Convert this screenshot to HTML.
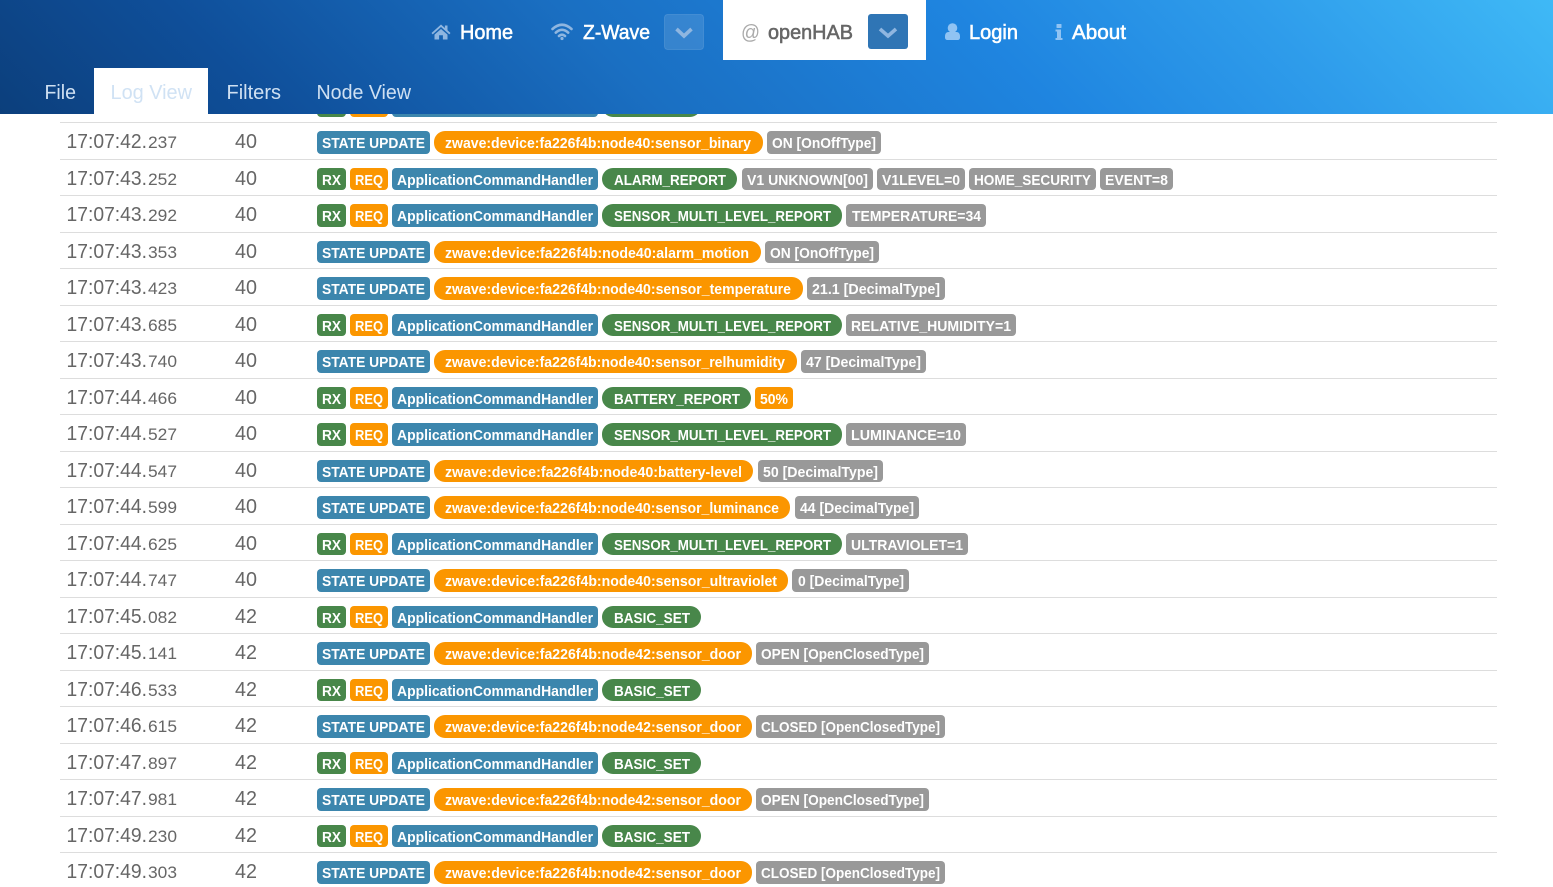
<!DOCTYPE html>
<html lang="en">
<head>
<meta charset="utf-8">
<title>openHAB Log Viewer</title>
<style>
html,body{margin:0;padding:0;background:#fff;overflow:hidden}
body{width:1553px;height:887px;position:relative;font-family:"Liberation Sans",sans-serif}
header{position:absolute;left:0;top:0;width:1553px;height:114px;background:linear-gradient(45deg,#0c3f7c 0%,#0f4f9a 17%,#1a6fc2 40%,#1f85e0 64%,#2f9deb 82%,#3fb9f6 100%)}
header svg,#log{position:absolute;left:0;top:0;display:block}
text{font-family:"Liberation Sans",sans-serif}
#log text.t{font-size:15px;font-weight:700;fill:#fff}
#log text.c{font-size:20.5px;fill:#666}
#log text.m{font-size:17px;fill:#666}
.e rect{height:23px}.d rect{height:22px}
rect.b{fill:#3c86ad}rect.o{fill:#fb9600}rect.g{fill:#48874a}rect.k{fill:#999}
rect{rx:4px}rect.p{rx:11px}
line{stroke:#ddd;stroke-width:1}
.n{font-size:20.5px;fill:#fff;stroke:#fff;stroke-width:.55px}
.s{font-size:20.5px;fill:#cfe0f2}
</style>
</head>
<body>
<svg id="log" width="1553" height="887" viewBox="0 0 1553 887" xmlns="http://www.w3.org/2000/svg">
<g stroke="#ddd" shape-rendering="crispEdges">
<line x1="60" x2="1497" y1="122.5" y2="122.5"/><line x1="60" x2="1497" y1="159.5" y2="159.5"/><line x1="60" x2="1497" y1="195.5" y2="195.5"/><line x1="60" x2="1497" y1="232.5" y2="232.5"/><line x1="60" x2="1497" y1="268.5" y2="268.5"/><line x1="60" x2="1497" y1="305.5" y2="305.5"/><line x1="60" x2="1497" y1="341.5" y2="341.5"/><line x1="60" x2="1497" y1="378.5" y2="378.5"/><line x1="60" x2="1497" y1="414.5" y2="414.5"/><line x1="60" x2="1497" y1="451.5" y2="451.5"/><line x1="60" x2="1497" y1="487.5" y2="487.5"/><line x1="60" x2="1497" y1="524.5" y2="524.5"/><line x1="60" x2="1497" y1="560.5" y2="560.5"/><line x1="60" x2="1497" y1="597.5" y2="597.5"/><line x1="60" x2="1497" y1="633.5" y2="633.5"/><line x1="60" x2="1497" y1="670.5" y2="670.5"/><line x1="60" x2="1497" y1="706.5" y2="706.5"/><line x1="60" x2="1497" y1="743.5" y2="743.5"/><line x1="60" x2="1497" y1="779.5" y2="779.5"/><line x1="60" x2="1497" y1="816.5" y2="816.5"/><line x1="60" x2="1497" y1="852.5" y2="852.5"/>
</g>

<g class="d" transform="translate(0,95)"><rect class="g" x="317" width="29"/><rect class="o" x="350" width="38"/><rect class="b" x="392" width="206"/><rect class="g p" x="602" width="99"/></g>

<g class="e" transform="translate(0,131)"><text class="c" y="17" x="66.500" textLength="80.500" lengthAdjust="spacingAndGlyphs">17:07:42.</text><text class="m" y="17" x="148" textLength="29" lengthAdjust="spacingAndGlyphs">237</text><text class="c" y="17" x="235" textLength="22" lengthAdjust="spacingAndGlyphs">40</text>
<rect class="b" x="317" width="113"/><text class="t" y="17" x="322" textLength="103" lengthAdjust="spacingAndGlyphs">STATE UPDATE</text><rect class="o p" x="434" width="329"/><text class="t" y="17" x="445" textLength="306" lengthAdjust="spacingAndGlyphs">zwave:device:fa226f4b:node40:sensor_binary</text><rect class="k" x="767" width="114"/><text class="t" y="17" x="772" textLength="104" lengthAdjust="spacingAndGlyphs">ON [OnOffType]</text></g>

<g class="d" transform="translate(0,168)"><text class="c" y="17" x="66.500" textLength="80.500" lengthAdjust="spacingAndGlyphs">17:07:43.</text><text class="m" y="17" x="148" textLength="29" lengthAdjust="spacingAndGlyphs">252</text><text class="c" y="17" x="235" textLength="22" lengthAdjust="spacingAndGlyphs">40</text>
<rect class="g" x="317" width="29"/><text class="t" y="17" x="322" textLength="19" lengthAdjust="spacingAndGlyphs">RX</text><rect class="o" x="350" width="38"/><text class="t" y="17" x="355" textLength="28" lengthAdjust="spacingAndGlyphs">REQ</text><rect class="b" x="392" width="206"/><text class="t" y="17" x="397" textLength="196" lengthAdjust="spacingAndGlyphs">ApplicationCommandHandler</text><rect class="g p" x="602" width="135"/><text class="t" y="17" x="614" textLength="112" lengthAdjust="spacingAndGlyphs">ALARM_REPORT</text><rect class="k" x="742" width="131"/><text class="t" y="17" x="747" textLength="121" lengthAdjust="spacingAndGlyphs">V1 UNKNOWN[00]</text><rect class="k" x="877" width="88"/><text class="t" y="17" x="882" textLength="78" lengthAdjust="spacingAndGlyphs">V1LEVEL=0</text><rect class="k" x="969" width="127"/><text class="t" y="17" x="974" textLength="117" lengthAdjust="spacingAndGlyphs">HOME_SECURITY</text><rect class="k" x="1100" width="73"/><text class="t" y="17" x="1105" textLength="63" lengthAdjust="spacingAndGlyphs">EVENT=8</text></g>

<g class="e" transform="translate(0,204)"><text class="c" y="17" x="66.500" textLength="80.500" lengthAdjust="spacingAndGlyphs">17:07:43.</text><text class="m" y="17" x="148" textLength="29" lengthAdjust="spacingAndGlyphs">292</text><text class="c" y="17" x="235" textLength="22" lengthAdjust="spacingAndGlyphs">40</text>
<rect class="g" x="317" width="29"/><text class="t" y="17" x="322" textLength="19" lengthAdjust="spacingAndGlyphs">RX</text><rect class="o" x="350" width="38"/><text class="t" y="17" x="355" textLength="28" lengthAdjust="spacingAndGlyphs">REQ</text><rect class="b" x="392" width="206"/><text class="t" y="17" x="397" textLength="196" lengthAdjust="spacingAndGlyphs">ApplicationCommandHandler</text><rect class="g p" x="602" width="240"/><text class="t" y="17" x="614" textLength="217" lengthAdjust="spacingAndGlyphs">SENSOR_MULTI_LEVEL_REPORT</text><rect class="k" x="846" width="140"/><text class="t" y="17" x="852" textLength="129" lengthAdjust="spacingAndGlyphs">TEMPERATURE=34</text></g>

<g class="d" transform="translate(0,241)"><text class="c" y="17" x="66.500" textLength="80.500" lengthAdjust="spacingAndGlyphs">17:07:43.</text><text class="m" y="17" x="148" textLength="29" lengthAdjust="spacingAndGlyphs">353</text><text class="c" y="17" x="235" textLength="22" lengthAdjust="spacingAndGlyphs">40</text>
<rect class="b" x="317" width="113"/><text class="t" y="17" x="322" textLength="103" lengthAdjust="spacingAndGlyphs">STATE UPDATE</text><rect class="o p" x="434" width="327"/><text class="t" y="17" x="445" textLength="304" lengthAdjust="spacingAndGlyphs">zwave:device:fa226f4b:node40:alarm_motion</text><rect class="k" x="765" width="114"/><text class="t" y="17" x="770" textLength="104" lengthAdjust="spacingAndGlyphs">ON [OnOffType]</text></g>

<g class="e" transform="translate(0,277)"><text class="c" y="17" x="66.500" textLength="80.500" lengthAdjust="spacingAndGlyphs">17:07:43.</text><text class="m" y="17" x="148" textLength="29" lengthAdjust="spacingAndGlyphs">423</text><text class="c" y="17" x="235" textLength="22" lengthAdjust="spacingAndGlyphs">40</text>
<rect class="b" x="317" width="113"/><text class="t" y="17" x="322" textLength="103" lengthAdjust="spacingAndGlyphs">STATE UPDATE</text><rect class="o p" x="434" width="369"/><text class="t" y="17" x="445" textLength="346" lengthAdjust="spacingAndGlyphs">zwave:device:fa226f4b:node40:sensor_temperature</text><rect class="k" x="807" width="138"/><text class="t" y="17" x="812" textLength="128" lengthAdjust="spacingAndGlyphs">21.1 [DecimalType]</text></g>

<g class="d" transform="translate(0,314)"><text class="c" y="17" x="66.500" textLength="80.500" lengthAdjust="spacingAndGlyphs">17:07:43.</text><text class="m" y="17" x="148" textLength="29" lengthAdjust="spacingAndGlyphs">685</text><text class="c" y="17" x="235" textLength="22" lengthAdjust="spacingAndGlyphs">40</text>
<rect class="g" x="317" width="29"/><text class="t" y="17" x="322" textLength="19" lengthAdjust="spacingAndGlyphs">RX</text><rect class="o" x="350" width="38"/><text class="t" y="17" x="355" textLength="28" lengthAdjust="spacingAndGlyphs">REQ</text><rect class="b" x="392" width="206"/><text class="t" y="17" x="397" textLength="196" lengthAdjust="spacingAndGlyphs">ApplicationCommandHandler</text><rect class="g p" x="602" width="240"/><text class="t" y="17" x="614" textLength="217" lengthAdjust="spacingAndGlyphs">SENSOR_MULTI_LEVEL_REPORT</text><rect class="k" x="846" width="170"/><text class="t" y="17" x="851" textLength="160" lengthAdjust="spacingAndGlyphs">RELATIVE_HUMIDITY=1</text></g>

<g class="e" transform="translate(0,350)"><text class="c" y="17" x="66.500" textLength="80.500" lengthAdjust="spacingAndGlyphs">17:07:43.</text><text class="m" y="17" x="148" textLength="29" lengthAdjust="spacingAndGlyphs">740</text><text class="c" y="17" x="235" textLength="22" lengthAdjust="spacingAndGlyphs">40</text>
<rect class="b" x="317" width="113"/><text class="t" y="17" x="322" textLength="103" lengthAdjust="spacingAndGlyphs">STATE UPDATE</text><rect class="o p" x="434" width="363"/><text class="t" y="17" x="445" textLength="340" lengthAdjust="spacingAndGlyphs">zwave:device:fa226f4b:node40:sensor_relhumidity</text><rect class="k" x="801" width="125"/><text class="t" y="17" x="806" textLength="115" lengthAdjust="spacingAndGlyphs">47 [DecimalType]</text></g>

<g class="d" transform="translate(0,387)"><text class="c" y="17" x="66.500" textLength="80.500" lengthAdjust="spacingAndGlyphs">17:07:44.</text><text class="m" y="17" x="148" textLength="29" lengthAdjust="spacingAndGlyphs">466</text><text class="c" y="17" x="235" textLength="22" lengthAdjust="spacingAndGlyphs">40</text>
<rect class="g" x="317" width="29"/><text class="t" y="17" x="322" textLength="19" lengthAdjust="spacingAndGlyphs">RX</text><rect class="o" x="350" width="38"/><text class="t" y="17" x="355" textLength="28" lengthAdjust="spacingAndGlyphs">REQ</text><rect class="b" x="392" width="206"/><text class="t" y="17" x="397" textLength="196" lengthAdjust="spacingAndGlyphs">ApplicationCommandHandler</text><rect class="g p" x="602" width="149"/><text class="t" y="17" x="614" textLength="126" lengthAdjust="spacingAndGlyphs">BATTERY_REPORT</text><rect class="o" x="755" width="38"/><text class="t" y="17" x="760" textLength="28" lengthAdjust="spacingAndGlyphs">50%</text></g>

<g class="e" transform="translate(0,423)"><text class="c" y="17" x="66.500" textLength="80.500" lengthAdjust="spacingAndGlyphs">17:07:44.</text><text class="m" y="17" x="148" textLength="29" lengthAdjust="spacingAndGlyphs">527</text><text class="c" y="17" x="235" textLength="22" lengthAdjust="spacingAndGlyphs">40</text>
<rect class="g" x="317" width="29"/><text class="t" y="17" x="322" textLength="19" lengthAdjust="spacingAndGlyphs">RX</text><rect class="o" x="350" width="38"/><text class="t" y="17" x="355" textLength="28" lengthAdjust="spacingAndGlyphs">REQ</text><rect class="b" x="392" width="206"/><text class="t" y="17" x="397" textLength="196" lengthAdjust="spacingAndGlyphs">ApplicationCommandHandler</text><rect class="g p" x="602" width="240"/><text class="t" y="17" x="614" textLength="217" lengthAdjust="spacingAndGlyphs">SENSOR_MULTI_LEVEL_REPORT</text><rect class="k" x="846" width="120"/><text class="t" y="17" x="851" textLength="110" lengthAdjust="spacingAndGlyphs">LUMINANCE=10</text></g>

<g class="d" transform="translate(0,460)"><text class="c" y="17" x="66.500" textLength="80.500" lengthAdjust="spacingAndGlyphs">17:07:44.</text><text class="m" y="17" x="148" textLength="29" lengthAdjust="spacingAndGlyphs">547</text><text class="c" y="17" x="235" textLength="22" lengthAdjust="spacingAndGlyphs">40</text>
<rect class="b" x="317" width="113"/><text class="t" y="17" x="322" textLength="103" lengthAdjust="spacingAndGlyphs">STATE UPDATE</text><rect class="o p" x="434" width="319"/><text class="t" y="17" x="445" textLength="297" lengthAdjust="spacingAndGlyphs">zwave:device:fa226f4b:node40:battery-level</text><rect class="k" x="758" width="125"/><text class="t" y="17" x="763" textLength="115" lengthAdjust="spacingAndGlyphs">50 [DecimalType]</text></g>

<g class="e" transform="translate(0,496)"><text class="c" y="17" x="66.500" textLength="80.500" lengthAdjust="spacingAndGlyphs">17:07:44.</text><text class="m" y="17" x="148" textLength="29" lengthAdjust="spacingAndGlyphs">599</text><text class="c" y="17" x="235" textLength="22" lengthAdjust="spacingAndGlyphs">40</text>
<rect class="b" x="317" width="113"/><text class="t" y="17" x="322" textLength="103" lengthAdjust="spacingAndGlyphs">STATE UPDATE</text><rect class="o p" x="434" width="356"/><text class="t" y="17" x="445" textLength="334" lengthAdjust="spacingAndGlyphs">zwave:device:fa226f4b:node40:sensor_luminance</text><rect class="k" x="795" width="124"/><text class="t" y="17" x="800" textLength="114" lengthAdjust="spacingAndGlyphs">44 [DecimalType]</text></g>

<g class="d" transform="translate(0,533)"><text class="c" y="17" x="66.500" textLength="80.500" lengthAdjust="spacingAndGlyphs">17:07:44.</text><text class="m" y="17" x="148" textLength="29" lengthAdjust="spacingAndGlyphs">625</text><text class="c" y="17" x="235" textLength="22" lengthAdjust="spacingAndGlyphs">40</text>
<rect class="g" x="317" width="29"/><text class="t" y="17" x="322" textLength="19" lengthAdjust="spacingAndGlyphs">RX</text><rect class="o" x="350" width="38"/><text class="t" y="17" x="355" textLength="28" lengthAdjust="spacingAndGlyphs">REQ</text><rect class="b" x="392" width="206"/><text class="t" y="17" x="397" textLength="196" lengthAdjust="spacingAndGlyphs">ApplicationCommandHandler</text><rect class="g p" x="602" width="240"/><text class="t" y="17" x="614" textLength="217" lengthAdjust="spacingAndGlyphs">SENSOR_MULTI_LEVEL_REPORT</text><rect class="k" x="846" width="122"/><text class="t" y="17" x="851" textLength="112" lengthAdjust="spacingAndGlyphs">ULTRAVIOLET=1</text></g>

<g class="e" transform="translate(0,569)"><text class="c" y="17" x="66.500" textLength="80.500" lengthAdjust="spacingAndGlyphs">17:07:44.</text><text class="m" y="17" x="148" textLength="29" lengthAdjust="spacingAndGlyphs">747</text><text class="c" y="17" x="235" textLength="22" lengthAdjust="spacingAndGlyphs">40</text>
<rect class="b" x="317" width="113"/><text class="t" y="17" x="322" textLength="103" lengthAdjust="spacingAndGlyphs">STATE UPDATE</text><rect class="o p" x="434" width="354"/><text class="t" y="17" x="445" textLength="332" lengthAdjust="spacingAndGlyphs">zwave:device:fa226f4b:node40:sensor_ultraviolet</text><rect class="k" x="792" width="117"/><text class="t" y="17" x="798" textLength="106" lengthAdjust="spacingAndGlyphs">0 [DecimalType]</text></g>

<g class="d" transform="translate(0,606)"><text class="c" y="17" x="66.500" textLength="80.500" lengthAdjust="spacingAndGlyphs">17:07:45.</text><text class="m" y="17" x="148" textLength="29" lengthAdjust="spacingAndGlyphs">082</text><text class="c" y="17" x="235" textLength="22" lengthAdjust="spacingAndGlyphs">42</text>
<rect class="g" x="317" width="29"/><text class="t" y="17" x="322" textLength="19" lengthAdjust="spacingAndGlyphs">RX</text><rect class="o" x="350" width="38"/><text class="t" y="17" x="355" textLength="28" lengthAdjust="spacingAndGlyphs">REQ</text><rect class="b" x="392" width="206"/><text class="t" y="17" x="397" textLength="196" lengthAdjust="spacingAndGlyphs">ApplicationCommandHandler</text><rect class="g p" x="602" width="99"/><text class="t" y="17" x="614" textLength="76" lengthAdjust="spacingAndGlyphs">BASIC_SET</text></g>

<g class="e" transform="translate(0,642)"><text class="c" y="17" x="66.500" textLength="80.500" lengthAdjust="spacingAndGlyphs">17:07:45.</text><text class="m" y="17" x="148" textLength="29" lengthAdjust="spacingAndGlyphs">141</text><text class="c" y="17" x="235" textLength="22" lengthAdjust="spacingAndGlyphs">42</text>
<rect class="b" x="317" width="113"/><text class="t" y="17" x="322" textLength="103" lengthAdjust="spacingAndGlyphs">STATE UPDATE</text><rect class="o p" x="434" width="318"/><text class="t" y="17" x="445" textLength="296" lengthAdjust="spacingAndGlyphs">zwave:device:fa226f4b:node42:sensor_door</text><rect class="k" x="756" width="173"/><text class="t" y="17" x="761" textLength="163" lengthAdjust="spacingAndGlyphs">OPEN [OpenClosedType]</text></g>

<g class="d" transform="translate(0,679)"><text class="c" y="17" x="66.500" textLength="80.500" lengthAdjust="spacingAndGlyphs">17:07:46.</text><text class="m" y="17" x="148" textLength="29" lengthAdjust="spacingAndGlyphs">533</text><text class="c" y="17" x="235" textLength="22" lengthAdjust="spacingAndGlyphs">42</text>
<rect class="g" x="317" width="29"/><text class="t" y="17" x="322" textLength="19" lengthAdjust="spacingAndGlyphs">RX</text><rect class="o" x="350" width="38"/><text class="t" y="17" x="355" textLength="28" lengthAdjust="spacingAndGlyphs">REQ</text><rect class="b" x="392" width="206"/><text class="t" y="17" x="397" textLength="196" lengthAdjust="spacingAndGlyphs">ApplicationCommandHandler</text><rect class="g p" x="602" width="99"/><text class="t" y="17" x="614" textLength="76" lengthAdjust="spacingAndGlyphs">BASIC_SET</text></g>

<g class="e" transform="translate(0,715)"><text class="c" y="17" x="66.500" textLength="80.500" lengthAdjust="spacingAndGlyphs">17:07:46.</text><text class="m" y="17" x="148" textLength="29" lengthAdjust="spacingAndGlyphs">615</text><text class="c" y="17" x="235" textLength="22" lengthAdjust="spacingAndGlyphs">42</text>
<rect class="b" x="317" width="113"/><text class="t" y="17" x="322" textLength="103" lengthAdjust="spacingAndGlyphs">STATE UPDATE</text><rect class="o p" x="434" width="318"/><text class="t" y="17" x="445" textLength="296" lengthAdjust="spacingAndGlyphs">zwave:device:fa226f4b:node42:sensor_door</text><rect class="k" x="756" width="189"/><text class="t" y="17" x="761" textLength="179" lengthAdjust="spacingAndGlyphs">CLOSED [OpenClosedType]</text></g>

<g class="d" transform="translate(0,752)"><text class="c" y="17" x="66.500" textLength="80.500" lengthAdjust="spacingAndGlyphs">17:07:47.</text><text class="m" y="17" x="148" textLength="29" lengthAdjust="spacingAndGlyphs">897</text><text class="c" y="17" x="235" textLength="22" lengthAdjust="spacingAndGlyphs">42</text>
<rect class="g" x="317" width="29"/><text class="t" y="17" x="322" textLength="19" lengthAdjust="spacingAndGlyphs">RX</text><rect class="o" x="350" width="38"/><text class="t" y="17" x="355" textLength="28" lengthAdjust="spacingAndGlyphs">REQ</text><rect class="b" x="392" width="206"/><text class="t" y="17" x="397" textLength="196" lengthAdjust="spacingAndGlyphs">ApplicationCommandHandler</text><rect class="g p" x="602" width="99"/><text class="t" y="17" x="614" textLength="76" lengthAdjust="spacingAndGlyphs">BASIC_SET</text></g>

<g class="e" transform="translate(0,788)"><text class="c" y="17" x="66.500" textLength="80.500" lengthAdjust="spacingAndGlyphs">17:07:47.</text><text class="m" y="17" x="148" textLength="29" lengthAdjust="spacingAndGlyphs">981</text><text class="c" y="17" x="235" textLength="22" lengthAdjust="spacingAndGlyphs">42</text>
<rect class="b" x="317" width="113"/><text class="t" y="17" x="322" textLength="103" lengthAdjust="spacingAndGlyphs">STATE UPDATE</text><rect class="o p" x="434" width="318"/><text class="t" y="17" x="445" textLength="296" lengthAdjust="spacingAndGlyphs">zwave:device:fa226f4b:node42:sensor_door</text><rect class="k" x="756" width="173"/><text class="t" y="17" x="761" textLength="163" lengthAdjust="spacingAndGlyphs">OPEN [OpenClosedType]</text></g>

<g class="d" transform="translate(0,825)"><text class="c" y="17" x="66.500" textLength="80.500" lengthAdjust="spacingAndGlyphs">17:07:49.</text><text class="m" y="17" x="148" textLength="29" lengthAdjust="spacingAndGlyphs">230</text><text class="c" y="17" x="235" textLength="22" lengthAdjust="spacingAndGlyphs">42</text>
<rect class="g" x="317" width="29"/><text class="t" y="17" x="322" textLength="19" lengthAdjust="spacingAndGlyphs">RX</text><rect class="o" x="350" width="38"/><text class="t" y="17" x="355" textLength="28" lengthAdjust="spacingAndGlyphs">REQ</text><rect class="b" x="392" width="206"/><text class="t" y="17" x="397" textLength="196" lengthAdjust="spacingAndGlyphs">ApplicationCommandHandler</text><rect class="g p" x="602" width="99"/><text class="t" y="17" x="614" textLength="76" lengthAdjust="spacingAndGlyphs">BASIC_SET</text></g>

<g class="e" transform="translate(0,861)"><text class="c" y="17" x="66.500" textLength="80.500" lengthAdjust="spacingAndGlyphs">17:07:49.</text><text class="m" y="17" x="148" textLength="29" lengthAdjust="spacingAndGlyphs">303</text><text class="c" y="17" x="235" textLength="22" lengthAdjust="spacingAndGlyphs">42</text>
<rect class="b" x="317" width="113"/><text class="t" y="17" x="322" textLength="103" lengthAdjust="spacingAndGlyphs">STATE UPDATE</text><rect class="o p" x="434" width="318"/><text class="t" y="17" x="445" textLength="296" lengthAdjust="spacingAndGlyphs">zwave:device:fa226f4b:node42:sensor_door</text><rect class="k" x="756" width="189"/><text class="t" y="17" x="761" textLength="179" lengthAdjust="spacingAndGlyphs">CLOSED [OpenClosedType]</text></g>
</svg>

<header>
<svg width="1553" height="114" viewBox="0 0 1553 114" xmlns="http://www.w3.org/2000/svg">
<rect x="723" y="0" width="203" height="60" fill="#fff" style="rx:0"/>
<rect x="94" y="68" width="114" height="46" fill="#fff" style="rx:0"/>

<path fill="#8fb6e0" d="M441 24.500 L431.500 33 l1.200 1.400 L441 27 l8.300 7.400 1.200-1.400 -3-2.700V25.500h-2.600v2.500Z"/>
<path fill="#8fb6e0" d="M434.500 34.600 L441 29 l6.500 5.600V39.500h-4.600v-4.200h-3.800v4.200h-4.600Z"/>
<text class="n" x="460" y="39" textLength="53" lengthAdjust="spacingAndGlyphs">Home</text>

<g fill="none" stroke="#8fb6e0" stroke-width="2.600" stroke-linecap="round">
<path d="M552.500 29 Q562 20.500 571.500 29"/>
<path d="M555.800 32.600 Q562 27 568.200 32.600"/>
<path d="M559 36 Q562 33.400 565 36"/>
</g>
<circle cx="562" cy="38.500" r="1.600" fill="#8fb6e0"/>
<text class="n" x="583" y="39" textLength="67" lengthAdjust="spacingAndGlyphs">Z-Wave</text>

<rect x="664.500" y="14.500" width="39" height="35" fill="#fff" fill-opacity=".12" stroke="#fff" stroke-opacity=".12" style="rx:3px"/>
<path d="M676.500 29 L684 36 L691.500 29" fill="none" stroke="#8fb6e0" stroke-width="3.600"/>

<text x="741" y="39" font-size="20" fill="#aaa" textLength="19" lengthAdjust="spacingAndGlyphs">@</text>
<text x="768" y="39" font-size="20.500" fill="#666" stroke="#666" stroke-width=".55" textLength="85" lengthAdjust="spacingAndGlyphs">openHAB</text>

<rect x="868" y="14" width="40" height="35" fill="#2f75b5" style="rx:3px"/>
<path d="M880 29 L888 36 L896 29" fill="none" stroke="#8fb6e0" stroke-width="3.600"/>

<circle cx="952.500" cy="28" r="4.800" fill="#90c3f3"/>
<path fill="#90c3f3" d="M945 36.500c0-3 1.500-4.500 3.500-4.500h8c2 0 3.500 1.500 3.500 4.500v1c0 1.500-1 2.500-2.500 2.500h-10c-1.500 0-2.500-1-2.500-2.500Z"/>
<text class="n" x="969" y="39" textLength="49" lengthAdjust="spacingAndGlyphs">Login</text>

<rect x="1056.500" y="24" width="5" height="4" fill="#90c3f3" style="rx:.5px"/>
<path fill="#90c3f3" d="M1055.500 29.500h5.500v8.500h1.500v2h-7v-2h1.500v-6.500h-1.500Z"/>
<text class="n" x="1072" y="39" textLength="54" lengthAdjust="spacingAndGlyphs">About</text>

<text class="s" x="44.500" y="99" textLength="31.500" lengthAdjust="spacingAndGlyphs">File</text>
<text x="110.500" y="99" font-size="20.500" fill="#d0e2f4" textLength="81.500" lengthAdjust="spacingAndGlyphs">Log View</text>
<text class="s" x="226.500" y="99" textLength="54.500" lengthAdjust="spacingAndGlyphs">Filters</text>
<text class="s" x="316.500" y="99" textLength="94.500" lengthAdjust="spacingAndGlyphs">Node View</text>
</svg>
</header>
</body>
</html>
